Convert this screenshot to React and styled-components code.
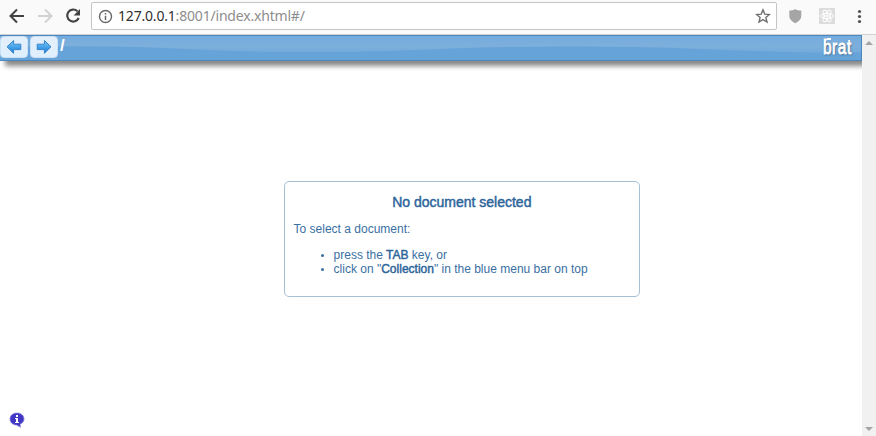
import React from "react";
import styled, { createGlobalStyle } from "styled-components";

const GlobalStyle = createGlobalStyle`
  * { box-sizing: border-box; }
  html, body { margin: 0; overflow: hidden; background: #fff; }
`;

const Window = styled.div`
  display: flex;
  flex-direction: column;
  width: 876px;
  height: 436px;
  background: #fff;
  font-family: "Liberation Sans", Arial, sans-serif;
`;

const BrowserBar = styled.header`
  display: flex;
  align-items: center;
  height: 35px;
  flex: none;
  padding: 0 0 3px 8px;
  background: #fafafa;
  border-bottom: 1px solid #cfd3d8;
`;

const NavIcons = styled.div`
  display: flex;
  gap: 11.5px;
  width: 83px;
  svg { display: block; }
`;

const AddressField = styled.div`
  display: flex;
  align-items: center;
  width: 686px;
  height: 28px;
  margin-top: 1px;
  padding: 0 5px 0 6px;
  background: #fff;
  border: 1px solid #c5c5c5;
  border-radius: 2px;
  svg { flex: none; }
`;

const Url = styled.div`
  flex: 1;
  margin-left: 5px;
  color: #8d8d8d;
  font: 14px/20px "Noto Sans", sans-serif;
  letter-spacing: -0.19px;
  white-space: nowrap;
`;

const Host = styled.span`
  color: #303030;
`;

const Extensions = styled.div`
  display: flex;
  align-items: center;
  margin-left: 11px;
  svg { display: block; }
`;

const Viewport = styled.div`
  display: flex;
  flex: 1;
  min-height: 0;
`;

const Page = styled.main`
  display: flex;
  flex-direction: column;
  width: 862px;
`;

const MenuBar = styled.nav`
  position: relative;
  display: flex;
  align-items: flex-start;
  flex: none;
  height: 26px;
  border: 1px solid #4b86bd;
  border-left: 0;
  background: #66a3d8;
  box-shadow: 5px 5px 5px #888;
  clip-path: inset(0 0 -12px 0);
`;

const Gloss = styled.svg`
  position: absolute;
  inset: 0;
`;

const ArrowButton = styled.button`
  position: relative;
  display: grid;
  place-items: center;
  width: 28px;
  height: 22px;
  margin: 0 2px 0 0;
  padding: 0;
  border: 1px solid #c9e1f6;
  border-radius: 4px;
  background: linear-gradient(#e3effb, #e0effd);
`;

const Path = styled.span`
  position: relative;
  margin-top: 1px;
  color: #fff;
  font-size: 17px;
  line-height: 18px;
  font-weight: bold;
`;

const Logo = styled.span`
  position: relative;
  width: 28px;
  margin: -1px 10px 0 auto;
  color: #fff;
  font: 21px/24px "Liberation Sans", Arial, sans-serif;
  letter-spacing: 0.8px;
  -webkit-text-stroke: 0.9px #fff;
  text-shadow: 1px 1px 2px #365777, 0 0 2px #4d779e;
  transform: scaleX(0.73);
  transform-origin: left;

  &::before {
    content: "";
    position: absolute;
    left: 1px;
    top: 3px;
    width: 8px;
    height: 6px;
    border-top: 2px solid #fff;
    border-left: 2px solid #fff;
    border-top-left-radius: 6px;
  }
`;

const Content = styled.section`
  display: flex;
  flex: 1;
  flex-direction: column;
  justify-content: space-between;
`;

const Message = styled.article`
  width: 356px;
  height: 116px;
  margin: 120px 0 0 284px;
  padding: 12px 9px 0 8.6px;
  border: 1px solid #a6c0d6;
  border-radius: 5px;
  color: #3a6fa3;
  font-size: 12px;
  line-height: 14px;
`;

const Title = styled.h1`
  margin: 0 0 12px;
  font-size: 14px;
  line-height: 16px;
  font-weight: normal;
  text-align: center;
  color: #2c659a;
  -webkit-text-stroke: 0.45px #2c659a;
`;

const Intro = styled.p`
  margin: 0 0 12px;
`;

const Steps = styled.ul`
  margin: 0;
  padding-left: 40px;

  li::marker { font-size: 10px; }
`;

const Strong = styled.strong`
  font-weight: normal;
  color: #2c659a;
  -webkit-text-stroke: 0.45px #2c659a;
`;

const InfoIcon = styled.svg`
  margin: 0 0 8px 9px;
`;

const Scrollbar = styled.aside`
  display: flex;
  flex-direction: column;
  justify-content: space-between;
  align-items: center;
  width: 14px;
  padding: 6px 0 4px;
  background: #f1f1f1;
`;

function Arrow({ flip }) {
  const id = flip ? "arrow-next" : "arrow-previous";
  return (
    <svg width="16" height="16" viewBox="0 0 16 16">
      <defs>
        <linearGradient id={id} x2="0" y2="1">
          <stop offset="0" stopColor="#7acbfa" />
          <stop offset="1" stopColor="#147bd8" />
        </linearGradient>
      </defs>
      <path
        transform={flip ? "translate(16 0) scale(-1 1)" : undefined}
        d="M1 7.800 7.600 1.500v3.700h7.200v5.400H7.600v3.700Z"
        fill={`url(#${id})`}
        stroke="#3784c8"
        strokeLinejoin="round"
      />
    </svg>
  );
}

function Navigation() {
  return (
    <NavIcons>
      <svg width="17" height="16" viewBox="0 0 17 16" fill="none" stroke="#424242" strokeWidth="2">
        <path d="M16 8H3M9 1.500 2.500 8 9 14.500" />
      </svg>
      <svg width="17" height="16" viewBox="0 0 17 16" fill="none" stroke="#d2d2d2" strokeWidth="2">
        <path d="M1 8h13M8 1.500 14.500 8 8 14.500" />
      </svg>
      <svg width="16" height="16" viewBox="0 0 16 16">
        <path d="M12.400 3.200A6 6 0 1 0 13.700 10" fill="none" stroke="#424242" strokeWidth="2.200" />
        <path d="M15 1v6.400H8.600Z" fill="#424242" />
      </svg>
    </NavIcons>
  );
}

export default function App() {
  return (
    <Window>
      <GlobalStyle />
      <BrowserBar>
        <Navigation />
        <AddressField>
          <svg width="15" height="15" viewBox="0 0 15 15">
            <circle cx="7.5" cy="7.5" r="6" fill="none" stroke="#686868" strokeWidth="1.4" />
            <path d="M7.500 6.700V11M7.500 4v1.500" stroke="#686868" strokeWidth="1.5" />
          </svg>
          <Url><Host>127.0.0.1</Host>:8001/index.xhtml#/</Url>
          <svg width="16" height="16" viewBox="0 0 16 16">
            <path d="m8 1.900 1.800 4.200 4.600.4-3.500 3 1.100 4.500L8 11.600 4 14l1.100-4.500-3.500-3 4.600-.4Z" fill="none" stroke="#707070" strokeWidth="1.4" />
          </svg>
        </AddressField>
        <Extensions>
          <svg width="15" height="16" viewBox="0 0 15 16">
            <path d="M7.300 1c2 1.500 3.800 1.600 6 1.600v5c0 3.600-2.200 5.700-6 7.700-3.800-2-6-4.100-6-7.700v-5c2.200 0 4-.1 6-1.600Z" fill="#a5a5a5" />
          </svg>
          <svg width="48" height="16" viewBox="0 0 48 16">
            <path d="M16 0h16v16H16Z" fill="#dcdcdc" />
            <g transform="translate(24 8)" fill="none" stroke="#fff" strokeWidth="1">
              <ellipse rx="6.4" ry="2.6" />
              <ellipse rx="6.4" ry="2.6" transform="rotate(60)" />
              <ellipse rx="6.4" ry="2.6" transform="rotate(120)" />
              <circle r="1" fill="#fff" />
            </g>
          </svg>
          <svg width="22" height="16" viewBox="0 0 22 16" fill="#505050">
            <circle cx="8.5" cy="3.5" r="1.6" />
            <circle cx="8.5" cy="8.5" r="1.6" />
            <circle cx="8.5" cy="13.5" r="1.6" />
          </svg>
        </Extensions>
      </BrowserBar>
      <Viewport>
        <Page>
          <MenuBar>
            <Gloss width="861" height="24" viewBox="0 0 861 24">
              <defs>
                <linearGradient id="gloss" x2="0" y2="1">
                  <stop offset="0" stopColor="#73abde" />
                  <stop offset=".55" stopColor="#7dafdb" />
                  <stop offset="1" stopColor="#74abdb" />
                </linearGradient>
              </defs>
              <path d="M0 0H861V16C820 18 760 15 700 13 610 9.500 520 10 440 13 350 17 270 17 200 13.500 130 10 60 9 0 12Z" fill="url(#gloss)" />
            </Gloss>
            <ArrowButton aria-label="Previous"><Arrow /></ArrowButton>
            <ArrowButton aria-label="Next"><Arrow flip /></ArrowButton>
            <Path>/</Path>
            <Logo>brat</Logo>
          </MenuBar>
          <Content>
            <Message>
              <Title>No document selected</Title>
              <Intro>To select a document:</Intro>
              <Steps>
                <li>press the <Strong>TAB</Strong> key, or</li>
                <li>click on "<Strong>Collection</Strong>" in the blue menu bar on top</li>
              </Steps>
            </Message>
            <InfoIcon width="16" height="16" viewBox="0 0 16 16">
              <path d="M8 1C3.800 1 1 3.400 1 7s2.800 6 6.500 6l4 2.300-.4-3.100C13.600 11.100 15 9.300 15 7c0-3.600-2.800-6-7-6Z" fill="#4338c6" stroke="#8c86df" strokeWidth=".7" />
              <path d="M7 3h2v2H7ZM6 6h3v4h1v1H6v-1h1V7H6Z" fill="#fff" />
            </InfoIcon>
          </Content>
        </Page>
        <Scrollbar>
          <svg width="8" height="5" viewBox="0 0 8 5"><path d="m0 4 4-4 4 4Z" fill="#a3a3a3" /></svg>
          <svg width="8" height="5" viewBox="0 0 8 5"><path d="m0 0 4 4 4-4Z" fill="#a3a3a3" /></svg>
        </Scrollbar>
      </Viewport>
    </Window>
  );
}
